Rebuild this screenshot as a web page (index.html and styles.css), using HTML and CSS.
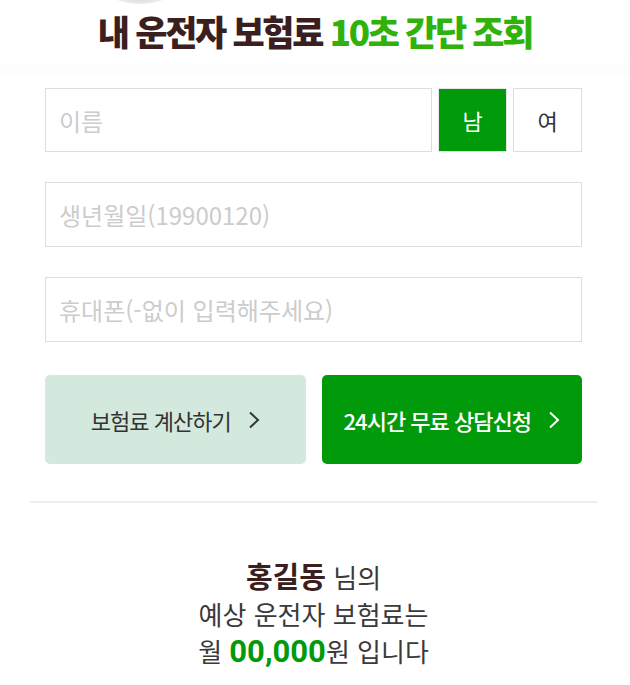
FILE: index.html
```html
<!DOCTYPE html>
<html lang="ko">
<head>
  <meta charset="UTF-8">
  <meta name="viewport" content="width=device-width, initial-scale=1.0">
  <title>내 운전자 보험료 10초 간단 조회</title>
  <link rel="stylesheet" href="styles.css">
</head>
<body>
  <div class="head">
    <div class="badge-shadow"></div>
    <h1>내 운전자 보험료 <span class="em">10초 간단 조회</span></h1>
  </div>

  <div class="wrap">
    <form class="calc">
      <div class="row">
        <input class="field" type="text" placeholder="이름">
        <button type="button" class="sex on">남</button>
        <button type="button" class="sex">여</button>
      </div>
      <div class="row">
        <input class="field" type="text" placeholder="생년월일(19900120)">
      </div>
      <div class="row">
        <input class="field" type="text" placeholder="휴대폰(-없이 입력해주세요)">
      </div>
      <div class="btns">
        <button type="button" class="btn calc-btn">보험료 계산하기
          <svg class="arr" viewBox="0 0 12 18" width="12" height="18"><path d="M2 1.5 L10 9 L2 16.5" fill="none" stroke="currentColor" stroke-width="2"/></svg>
        </button>
        <button type="button" class="btn apply-btn">24시간 무료 상담신청
          <svg class="arr" viewBox="0 0 12 18" width="12" height="18"><path d="M2 1.5 L10 9 L2 16.5" fill="none" stroke="currentColor" stroke-width="2"/></svg>
        </button>
      </div>
    </form>

    <div class="result">
      <p><b class="name">홍길동</b> 님의</p>
      <p>예상 운전자 보험료는</p>
      <p>월 <b class="price">00,000</b>원 입니다</p>
    </div>
  </div>
</body>
</html>
```

FILE: styles.css
```css
body { margin: 0; background: #fff; color: #333; font-family: "Noto Sans CJK KR", "Noto Sans", sans-serif; }
.head { position: relative; height: 75px; background: linear-gradient(#fff 70%, #fcfcfc); overflow: hidden; }
.badge-shadow { position: absolute; left: 100px; top: -40px; width: 80px; height: 44px; border-radius: 50%; background: radial-gradient(ellipse at 50% 60%, rgba(150, 140, 160, 0.55), rgba(200, 195, 205, 0.25) 55%, rgba(255, 255, 255, 0) 75%); }
h1 { margin: 0; padding-top: 8px; text-align: center; font-size: 35px; line-height: 46px; font-weight: 900; letter-spacing: -2.3px; color: #3b1e1e; }
h1 .em { color: #30b20a; }

.wrap { width: 567px; margin-left: 30px; }
.calc { padding: 13px 15px 0 15px; }
.row { display: flex; gap: 6px; margin-bottom: 30px; }
.field { flex: 1; min-width: 0; height: 65px; box-sizing: border-box; border: 1px solid #ddd; padding: 0 13px; font-family: inherit; font-size: 24px; color: #333; outline: none; }
.row:first-child .field { height: 64px; }
.field::placeholder { color: #ccc; }
.sex { width: 69px; height: 64px; box-sizing: border-box; border: 1px solid #ddd; background: #fff; font-family: inherit; font-size: 22px; color: #333; padding: 0; }
.sex.on { background: #009a0b; border-color: #e6e6e6; color: #fff; }

.btns { display: flex; gap: 16px; padding-top: 3px; }
.btn { flex: 1; height: 89px; border: 0; border-radius: 5px; font-family: inherit; font-size: 22px; letter-spacing: -1px; padding: 0; display: flex; align-items: center; justify-content: center; }
.btn .arr { margin-left: 17px; }
.calc-btn { background: #d3e9dd; color: #333; }
.apply-btn { background: #009a0b; color: #fff; font-weight: 500; }

.result { border-top: 2px solid #eee; margin-top: 37px; padding-top: 55px; text-align: center; }
.result p { margin: 0; font-size: 26px; line-height: 37px; color: #3a3a3a; }
.result b { line-height: 1; }
.result .name { font-size: 29px; color: #3b1e1e; }
.result .price { font-family: Roboto, "Noto Sans", sans-serif; font-size: 31px; color: #009a0b; }
```
